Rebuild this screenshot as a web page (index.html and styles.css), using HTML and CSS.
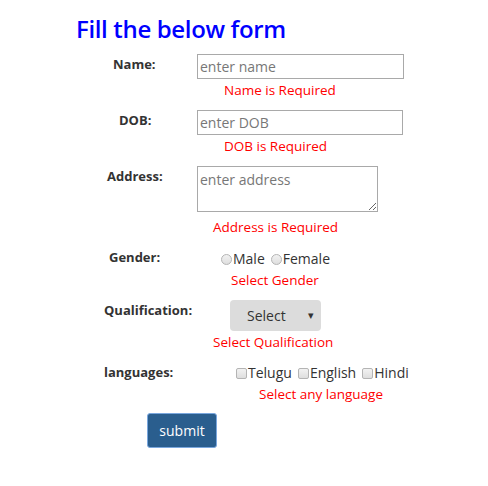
FILE: index.html
```html
<!DOCTYPE html>
<html>
<head>
<meta charset="utf-8">
<link rel="stylesheet" href="styles.css">
</head>
<body>
<h1 class="title">Fill the below form</h1>
<form class="form">
  <div class="row row-name">
    <label class="label">Name:</label>
    <div class="field">
      <input class="text-input input-name" type="text" placeholder="enter name">
      <span class="error">Name is Required</span>
    </div>
  </div>
  <div class="row row-dob">
    <label class="label">DOB:</label>
    <div class="field">
      <input class="text-input input-dob" type="text" placeholder="enter DOB">
      <span class="error">DOB is Required</span>
    </div>
  </div>
  <div class="row row-address">
    <label class="label">Address:</label>
    <div class="field">
      <textarea class="text-input input-address" placeholder="enter address"></textarea>
      <span class="error">Address is Required</span>
    </div>
  </div>
  <div class="row row-gender">
    <label class="label">Gender:</label>
    <div class="field">
      <div class="choices">
        <label class="choice"><input class="radio" type="radio" name="g">Male</label>
        <label class="choice"><input class="radio" type="radio" name="g">Female</label>
      </div>
      <span class="error">Select Gender</span>
    </div>
  </div>
  <div class="row row-qual">
    <label class="label">Qualification:</label>
    <div class="field">
      <span class="select-wrap"><select class="select"><option>Select</option></select></span>
      <span class="error">Select Qualification</span>
    </div>
  </div>
  <div class="row row-lang">
    <label class="label">languages:</label>
    <div class="field">
      <div class="choices">
        <label class="choice"><input class="check" type="checkbox">Telugu</label>
        <label class="choice"><input class="check" type="checkbox">English</label>
        <label class="choice"><input class="check" type="checkbox">Hindi</label>
      </div>
      <span class="error">Select any language</span>
    </div>
  </div>
  <div class="actions">
    <button class="submit" type="button">submit</button>
  </div>
</form>
</body>
</html>
```

FILE: styles.css
```css
* { box-sizing: border-box; }
body {
  margin: 0;
  background: #fff;
  font-family: "Open Sans", "Noto Sans", sans-serif;
  color: #333;
}
.title {
  margin: 14px 0 0 76px;
  font-size: 24px;
  line-height: 30px;
  font-weight: 600;
  letter-spacing: -0.35px;
  color: #0000ff;
}
.form {
  margin-top: 10px;
  display: flex;
  flex-direction: column;
  gap: 10px;
}
.row {
  display: grid;
  grid-template-columns: 197px 1fr;
  align-items: start;
}
.label {
  font-size: 13px;
  font-weight: 700;
  line-height: 20px;
  color: #333;
}
.field {
  display: flex;
  flex-direction: column;
  align-items: flex-start;
}
.error {
  display: block;
  color: #ff0000;
  font-size: 13.5px;
  line-height: 20px;
  margin-top: 1px;
}
.text-input {
  display: block;
  border: 1px solid #a9a9a9;
  font-family: inherit;
  font-size: 14px;
  padding: 2px 2px;
  margin: 0;
  color: #333;
  background: #fff;
}
.text-input::placeholder { color: #777; }
.input-name { width: 207px; height: 25px; }
.input-dob { width: 206px; height: 25px; }
.input-address { width: 181px; height: 46px; resize: both; padding-top: 3px; }

.row-name .label { padding-left: 113px; }
.row-name .error { margin-left: 27px; }
.row-dob .label { padding-left: 119px; }
.row-dob .error { margin-left: 27px; }
.row-address .label { padding-left: 107px; }
.row-address .error { margin-left: 16px; margin-top: 5px; }
.row-gender .label { padding-left: 109px; }
.row-gender .field { padding-left: 24px; padding-top: 2px; }
.row-gender .error { margin-left: 10px; }
.row-qual .label { padding-left: 104px; }
.row-qual .field { padding-left: 33px; }
.row-qual .error { margin-left: -17px; }
.row-lang .label { padding-left: 104px; }
.row-lang .field { padding-left: 39px; padding-top: 1px; }
.row-lang .error { margin-left: 23px; }

.choices {
  display: flex;
  gap: 6px;
  font-size: 14px;
  line-height: 20px;
  color: #333;
}
.choice {
  display: flex;
  align-items: center;
}
.radio, .check {
  appearance: none;
  -webkit-appearance: none;
  width: 11px;
  height: 11px;
  margin: 0 1px 0 0;
  border: 1px solid #b4b4b4;
  background: linear-gradient(#f2f2f2, #dedede);
}
.radio { border-radius: 50%; }
.check { border-radius: 2px; }

.select-wrap {
  position: relative;
  display: inline-block;
}
.select {
  appearance: none;
  -webkit-appearance: none;
  width: 91px;
  height: 31px;
  border: none;
  border-radius: 4px;
  background: #dcdcdc;
  font-family: inherit;
  font-size: 14px;
  color: #333;
  padding: 0 0 0 17px;
}
.select-wrap::after {
  content: "▾";
  position: absolute;
  right: 7px;
  top: 7px;
  font-size: 11px;
  color: #333;
  pointer-events: none;
}
.actions {
  padding-left: 147px;
  margin-top: -1px;
}
.submit {
  width: 70px;
  height: 35px;
  background: #2a5e8e;
  color: #fff;
  border: 1px solid #7aa7de;
  border-radius: 3px;
  font-family: inherit;
  font-size: 14px;
  padding: 0;
}
```
